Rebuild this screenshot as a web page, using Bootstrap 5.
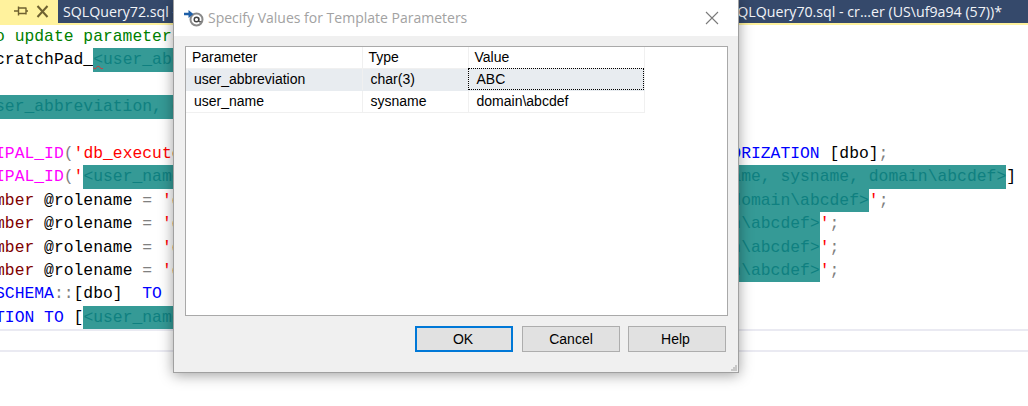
<!DOCTYPE html>
<html lang="en">
<head>
<meta charset="utf-8">
<title>Specify Values for Template Parameters</title>
<link href="https://cdn.jsdelivr.net/npm/bootstrap@5.3.0/dist/css/bootstrap.min.css" rel="stylesheet">
<style>
html,body{height:406px;overflow:hidden;background:#fff}
.stage{position:relative;width:1028px;height:406px;overflow:hidden}
.tabbar{height:25px;background:#35496b;border-bottom:2px solid #fff29d}
.tab-active{width:58px;background:#fff29d;color:#6b5d2a}
.tab-text{font:14.2px/23px "Open Sans",sans-serif;color:#f2f4f8;white-space:pre}
.tab-near{margin-left:5px}
.tab-far{margin-left:auto;padding-right:26px}
.editor{margin-left:-5px;font:16.375px/23.4px "Liberation Mono",monospace;color:#000;width:1100px}
.codeline{height:23.4px;white-space:pre}
.hl{display:inline-block;background:#359a96;color:#0f8080}
.hl-edge{text-decoration:underline wavy #e03030 1px}
.c-com{color:#008000}.c-kw{color:#0000ff}.c-sys{color:#800000}.c-fn{color:#ff00ff}.c-str{color:#ff0000}.c-op{color:#808080}
.rule{height:2px;background:#eaeaf2}
.rule-b{margin-top:19px}
.dlg{position:absolute;left:173px;top:-1px;width:566px;height:374px;background:#f0f0f0;border:1px solid #a0a0a0;box-shadow:0 2px 13px rgba(0,0,0,.38)}
.dlg-title{height:36px;background:#fff;padding:0 11px 0 10px}
.dlg-caption{font:14px/1 "Open Sans",sans-serif;color:#a2a2a2;white-space:nowrap}
.dlg-list{height:270px;margin:10px 10px 0 11px;background:#fff;border:1px solid #a9a9a9}
.grid-t{width:458px;table-layout:fixed;margin:0;font:14px/1 "Liberation Sans",sans-serif;color:#000}
.grid-t>*>tr>*{padding:0 0 0 8px;border-bottom:1px solid #f0f0f0;border-right:1px solid #f0f0f0;vertical-align:middle;background:transparent;box-shadow:none;font-weight:400;color:#000}
.grid-t th{height:21px;padding-left:6px!important}
.grid-t td{height:22px}
.row-sel>td{background:#e8ecf0!important;border-bottom-color:#e8ecf0!important}
.grid-t .cell-edit{outline:1px dotted #000;outline-offset:-1px;padding-left:8px}
.dlg-foot{padding:10px 12px 0 0;gap:0}
.dlg-btn{width:98px;height:26px;padding:0;border-radius:0;background:#e1e1e1;border:1px solid #adadad;color:#000;font:14px/1 "Liberation Sans",sans-serif}
.dlg-btn+.dlg-btn{margin-left:8px}
.dlg-btn:last-of-type{padding-right:3px}
.dlg-btn.is-def{border:2px solid #0078d7;margin-right:1px;padding-right:2px}
.dlg-grip{position:absolute;right:0;bottom:0}
</style>
</head>
<body>
<div class="stage">
  <div class="tabbar d-flex">
    <div class="tab-active d-flex align-items-center flex-shrink-0 justify-content-end">
      <svg width="46" height="23" viewBox="0 0 46 23" aria-hidden="true"><g fill="none" stroke="#6f6130" stroke-width="1.4"><path d="M2 11h4M6.500 6.500v9M7 8h7M7 13.500h7M14 7.500v7M14 11h2"/><path d="M25.500 6l10 11M35.500 6l-10 11" stroke-width="2"/></g></svg>
    </div>
    <span class="tab-text tab-near">SQLQuery72.sql -</span>
    <span class="tab-text tab-far">SQLQuery70.sql - cr...er (US\uf9a94 (57))*</span>
  </div>
  <div class="editor">
    <div class="codeline c-com">o update parameters</div>
    <div class="codeline">cratchPad_<span class="hl"><span class="hl-edge">&lt;</span>user_abbreviation, char(3), ABC&gt;</span></div>
    <div class="codeline"> </div>
    <div class="codeline"><span class="hl">ser_abbreviation, char(3), ABC&gt;</span></div>
    <div class="codeline"> </div>
    <div class="codeline"><span class="c-fn">IPAL_ID</span><span class="c-op">(</span><span class="c-str">'db_executor'</span><span class="c-op">)</span>                                                 <span class="c-kw">AUTHORIZATION</span> [dbo]<span class="c-op">;</span></div>
    <div class="codeline"><span class="c-fn">IPAL_ID</span><span class="c-op">(</span><span class="c-str">'</span><span class="hl">&lt;user_name, sysname, domain\abcdef&gt;') IS NULL CREATE USER [&lt;user_name, sysname, domain\abcdef&gt;</span>]</div>
    <div class="codeline"><span class="c-sys">mber</span> @rolename <span class="c-op">=</span> <span class="c-str">'db_executor'</span><span class="c-op">,</span><span class="hl">                       &lt;user_name, sysname, domain\abcdef&gt;</span><span class="c-str">'</span><span class="c-op">;</span></div>
    <div class="codeline"><span class="c-sys">mber</span> @rolename <span class="c-op">=</span> <span class="c-str">'db_datareader'</span><span class="c-op">,</span><span class="hl">                &lt;user_name, sysname, domain\abcdef&gt;</span><span class="c-str">'</span><span class="c-op">;</span></div>
    <div class="codeline"><span class="c-sys">mber</span> @rolename <span class="c-op">=</span> <span class="c-str">'db_datawriter'</span><span class="c-op">,</span><span class="hl">                &lt;user_name, sysname, domain\abcdef&gt;</span><span class="c-str">'</span><span class="c-op">;</span></div>
    <div class="codeline"><span class="c-sys">mber</span> @rolename <span class="c-op">=</span> <span class="c-str">'db_ddladmin'</span><span class="c-op">,</span><span class="hl">                  &lt;user_name, sysname, domain\abcdef&gt;</span><span class="c-str">'</span><span class="c-op">;</span></div>
    <div class="codeline"><span class="c-kw">SCHEMA</span><span class="c-op">::</span>[dbo]  <span class="c-kw">TO</span></div>
    <div class="codeline"><span class="c-kw">TION TO</span> [<span class="hl">&lt;user_name, sysname, domain\abcdef&gt;</span>]</div>
  </div>
  <div class="rule"></div>
  <div class="rule rule-b"></div>

  <div class="dlg d-flex flex-column" role="dialog">
    <div class="dlg-title d-flex align-items-center">
      <svg class="flex-shrink-0 me-1" width="20" height="18" viewBox="0 0 20 18" aria-hidden="true">
        <circle cx="12.500" cy="10.500" r="6" fill="none" stroke="#8a8a8a" stroke-width="2"/>
        <circle cx="12.500" cy="10.500" r="2.300" fill="none" stroke="#444" stroke-width="1.400"/>
        <path d="M14.800 8.500v3.500q.5 1.500 2.500.5" fill="none" stroke="#444" stroke-width="1.100"/>
        <path d="M0 3.800h4.500V1l4.800 4-4.800 4V6.200H0z" fill="#1e5fa8"/>
      </svg>
      <span class="dlg-caption">Specify Values for Template Parameters</span>
      <svg class="ms-auto me-2 flex-shrink-0" width="14" height="14" viewBox="0 0 14 14" aria-hidden="true"><path d="M1 1l12 12M13 1L1 13" stroke="#7a7a7a" stroke-width="1.100" fill="none"/></svg>
    </div>
    <div class="dlg-list">
      <table class="table grid-t">
        <colgroup><col style="width:176px"><col style="width:106px"><col style="width:176px"></colgroup>
        <thead><tr><th>Parameter</th><th>Type</th><th>Value</th></tr></thead>
        <tbody>
          <tr class="row-sel"><td>user_abbreviation</td><td>char(3)</td><td class="cell-edit">ABC</td></tr>
          <tr><td>user_name</td><td>sysname</td><td>domain\abcdef</td></tr>
        </tbody>
      </table>
    </div>
    <div class="dlg-foot d-flex justify-content-end">
      <button type="button" class="btn dlg-btn is-def">OK</button>
      <button type="button" class="btn dlg-btn">Cancel</button>
      <button type="button" class="btn dlg-btn">Help</button>
    </div>
    <svg class="dlg-grip" width="7" height="7" viewBox="0 0 7 7" aria-hidden="true"><path d="M4 0h2v2H4zM2 2h2v2H2zM4 2h2v2H4zM0 4h2v2H0zM2 4h2v2H2zM4 4h2v2H4z" fill="#c8c8c8"/></svg>
  </div>
</div>
<script src="https://cdn.jsdelivr.net/npm/bootstrap@5.3.0/dist/js/bootstrap.bundle.min.js"></script>
</body>
</html>
